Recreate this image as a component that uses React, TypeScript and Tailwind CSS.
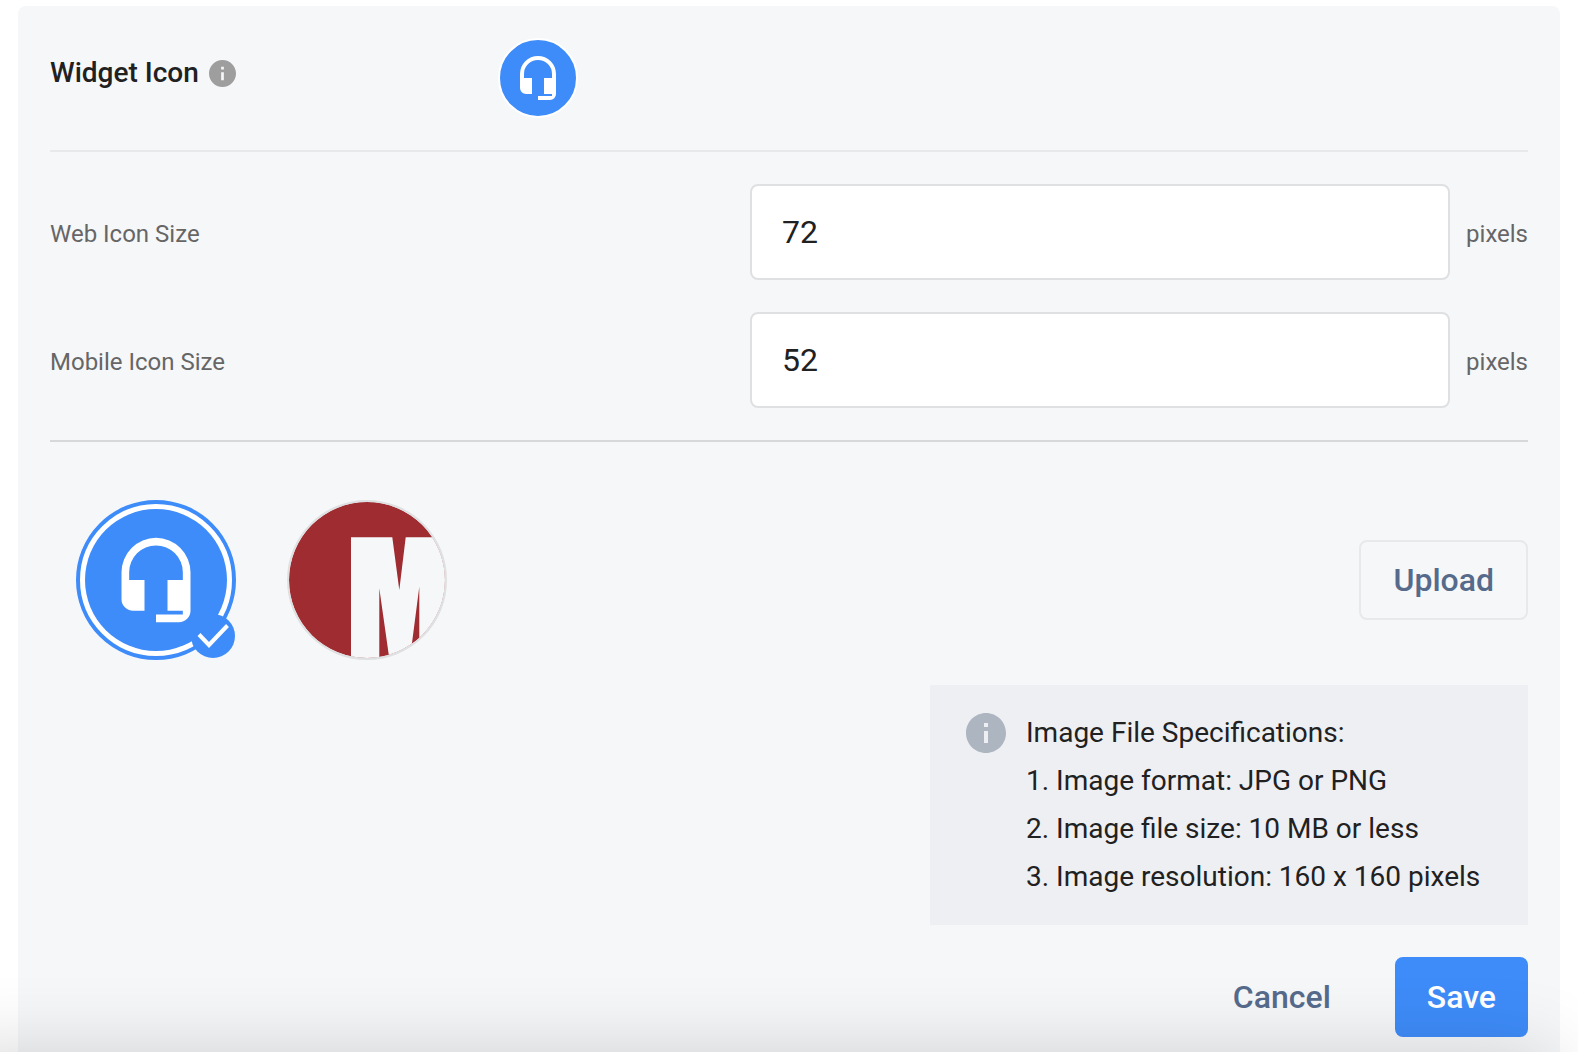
import { useState } from 'react';

interface IconProps {
  className?: string;
}

function InfoIcon({ className }: IconProps) {
  return (
    <svg className={className} viewBox="2 2 20 20" fill="currentColor" aria-hidden="true">
      <path d="M12 2C6.48 2 2 6.48 2 12s4.48 10 10 10 10-4.48 10-10S17.52 2 12 2zm1 15h-2v-6h2v6zm0-8h-2V7h2v2z" />
    </svg>
  );
}

function HeadsetIcon({ className }: IconProps) {
  return (
    <svg className={className} viewBox="0 0 24 24" fill="currentColor" aria-hidden="true">
      <path d="M12 1a9 9 0 0 0-9 9v7a3 3 0 0 0 3 3h3v-8H5v-2a7 7 0 0 1 14 0v2h-4v8h4v1h-7v2h6a3 3 0 0 0 3-3V10a9 9 0 0 0-9-9z" />
    </svg>
  );
}

function BrandIcon({ className }: IconProps) {
  return (
    <svg className={className} viewBox="0 0 160 160" aria-hidden="true">
      <defs>
        <clipPath id="brand-circle">
          <circle cx="80" cy="80" r="78" />
        </clipPath>
      </defs>
      <g clipPath="url(#brand-circle)">
        <rect width="160" height="160" fill="#9e2c31" />
        <path
          fill="#f6f7f9"
          d="M64 37.3h41.3l7 52.7 6.4-52.7H160V160h-27.7V86.7L122.8 160h-20.3L92.3 88.3V160H64z"
        />
      </g>
      <circle cx="80" cy="80" r="79" fill="none" stroke="#dfe0e1" strokeWidth="2" />
    </svg>
  );
}

function SelectedBadge() {
  return (
    <svg
      className="absolute -right-[3px] -bottom-[2px] size-11"
      viewBox="0 0 44 44"
      fill="none"
      aria-hidden="true"
    >
      <circle cx="22" cy="22" r="22" fill="#3e8cf9" />
      <path d="M8 20.5l10 10.5L36.5 11.5" stroke="#fff" strokeWidth="4" />
    </svg>
  );
}

interface SizeFieldProps {
  id: string;
  label: string;
  value: string;
  onChange: (value: string) => void;
}

function SizeField({ id, label, value, onChange }: SizeFieldProps) {
  return (
    <div className="flex items-center">
      <div className="grid flex-1 grid-cols-2 items-center">
        <label htmlFor={id} className="pt-1 text-2xl text-[#666666]">
          {label}
        </label>
        <input
          id={id}
          type="text"
          inputMode="numeric"
          value={value}
          onChange={(e) => onChange(e.target.value)}
          className="h-24 w-full rounded-lg border-2 border-[#dfe0e1] bg-white px-[30px] text-[32px] text-[#212121] outline-none"
        />
      </div>
      <span className="ml-4 pt-1 text-2xl text-[#666666]">pixels</span>
    </div>
  );
}

const specifications = [
  'Image format: JPG or PNG',
  'Image file size: 10 MB or less',
  'Image resolution: 160 x 160 pixels',
];

export default function App() {
  const [webSize, setWebSize] = useState('72');
  const [mobileSize, setMobileSize] = useState('52');
  const [selected, setSelected] = useState('headset');

  return (
    <div className="relative flex min-h-screen flex-col overflow-hidden bg-white px-[18px] pt-[6px] font-[Roboto,sans-serif]">
      <main className="flex-1 rounded-t-lg bg-[#f6f7f9] px-8 pt-8 pb-3">
        {/* Header */}
        <div className="flex items-start border-b-2 border-[#e8e9ea] pb-8">
          <div className="flex h-[70px] w-[448px] items-center gap-[10px]">
            <h2 className="text-[28px] font-medium text-[#212121]">Widget Icon</h2>
            <button type="button" aria-label="About the widget icon">
              <InfoIcon className="size-[27px] text-[#9e9e9e]" />
            </button>
          </div>
          <div className="flex size-20 items-center justify-center rounded-full border-2 border-white bg-[#3e8cf9] text-white">
            <HeadsetIcon className="size-12" />
          </div>
        </div>

        {/* Sizes */}
        <div className="space-y-8 border-b-2 border-[#d7d8da] py-8">
          <SizeField id="web-size" label="Web Icon Size" value={webSize} onChange={setWebSize} />
          <SizeField id="mobile-size" label="Mobile Icon Size" value={mobileSize} onChange={setMobileSize} />
        </div>

        {/* Icon choices */}
        <div className="flex items-center justify-between pt-[58px]">
          <div className="flex gap-[51px] pl-[26px]">
            <button
              type="button"
              aria-label="Headset icon"
              aria-pressed={selected === 'headset'}
              onClick={() => setSelected('headset')}
              className="relative flex size-40 items-center justify-center rounded-full border-4 border-[#3e8cf9] bg-white p-[5px]"
            >
              <span className="flex size-full items-center justify-center rounded-full bg-[#3e8cf9] text-white">
                <HeadsetIcon className="size-[92px]" />
              </span>
              {selected === 'headset' && <SelectedBadge />}
            </button>
            <button
              type="button"
              aria-label="Brand icon"
              aria-pressed={selected === 'brand'}
              onClick={() => setSelected('brand')}
              className="relative size-40 rounded-full"
            >
              <BrandIcon className="size-40" />
              {selected === 'brand' && <SelectedBadge />}
            </button>
          </div>
          <button
            type="button"
            className="h-20 rounded-lg border-2 border-[#e8e9ea] px-8 text-[32px] font-medium text-[#566b8c]"
          >
            Upload
          </button>
        </div>

        {/* File specifications */}
        <div className="mt-[25px] ml-auto flex w-[598px] max-w-full gap-5 bg-[#eeeff3] py-6 pl-9 text-[28px] leading-[48px] text-[#212121]">
          <InfoIcon className="mt-1 size-10 shrink-0 text-[#adb5c0]" />
          <div>
            <p>Image File Specifications:</p>
            <ol>
              {specifications.map((item, index) => (
                <li key={item}>
                  {index + 1}. {item}
                </li>
              ))}
            </ol>
          </div>
        </div>

        {/* Actions */}
        <div className="mt-8 flex justify-end gap-8 text-[32px] font-medium">
          <button type="button" className="h-20 px-8 text-[#566b8c]">
            Cancel
          </button>
          <button type="button" className="h-20 rounded-lg bg-[#3e8cf9] px-8 text-white">
            Save
          </button>
        </div>
      </main>

      {/* Shadow rising from the bottom edge */}
      <div className="pointer-events-none absolute top-full right-6 -left-20 h-40 shadow-[0_0_80px_rgba(0,0,0,0.16)]" />
    </div>
  );
}
